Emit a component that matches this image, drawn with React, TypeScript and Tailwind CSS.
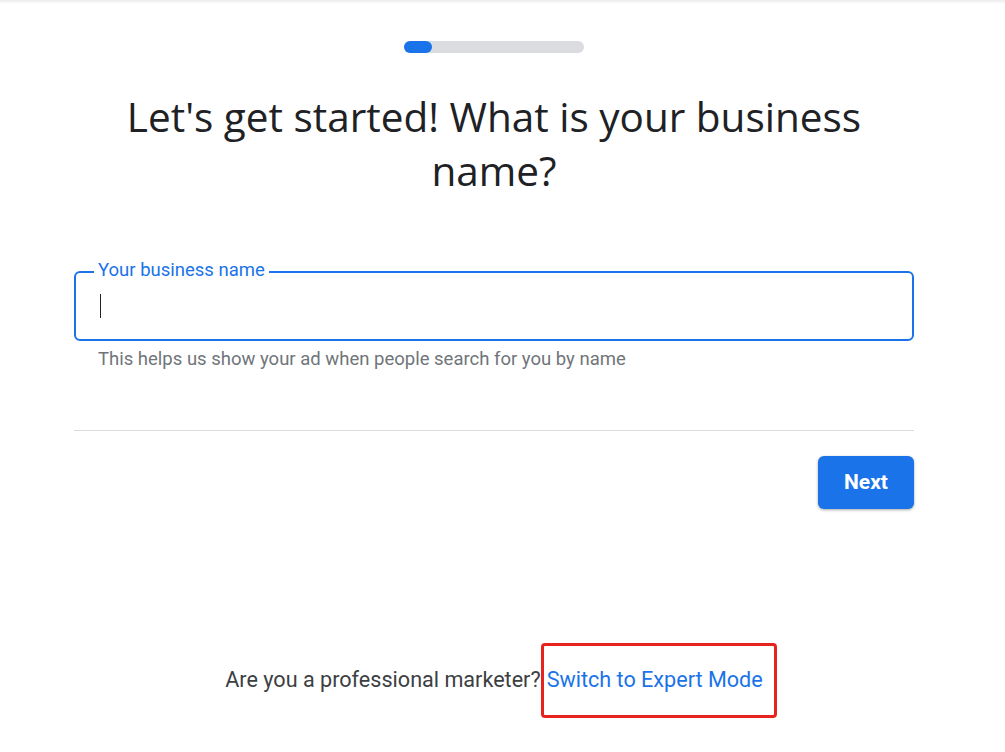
import React from "react";

export default function App() {
  return (
    <div className="relative min-h-[752px] w-[1005px] bg-white font-['Roboto',sans-serif]">
      <div className="h-[4px] w-full bg-gradient-to-b from-[#ececec] to-white" />
      <div className="ml-[74px] flex w-[840px] flex-col">
        {/* progress */}
        <div className="mt-[37px] flex justify-center">
          <div className="h-[12px] w-[180px] rounded-full bg-[#dadce0]">
            <div className="h-[12px] w-[28px] rounded-full bg-[#1a73e8]" />
          </div>
        </div>

        <h1 className="mt-[37px] px-[30px] text-center font-['Open_Sans',sans-serif] text-[40.5px] leading-[54px] text-[#202124]">
          Let's get started! What is your business name?
        </h1>

        {/* input */}
        <div className="relative mt-[73px]">
          <div className="flex h-[70px] items-center rounded-[6px] border-2 border-[#1a73e8] px-[24px]">
            <div className="h-[24px] w-[1px] bg-[#202124]" />
          </div>
          <span className="absolute left-[20px] top-[-11px] bg-white px-[4px] text-[18.5px] leading-[20px] text-[#1a73e8]">
            Your business name
          </span>
        </div>
        <p className="mt-[6px] pl-[24px] text-[18.5px] leading-[24px] text-[#70757a]">
          This helps us show your ad when people search for you by name
        </p>

        <div className="mt-[59px] h-px w-full bg-[#dadce0]" />

        <div className="mt-[25px] flex justify-end">
          <button className="h-[53px] w-[96px] rounded-[6px] bg-[#1a73e8] text-[21px] font-bold text-white shadow-[0_1px_3px_rgba(0,0,0,0.35)]">
            Next
          </button>
        </div>

        <div className="mt-[157px] flex justify-center text-[21.6px] leading-[28px] text-[#3c4043]">
          <span>Are you a professional marketer?</span>
          <span className="relative ml-[6px] text-[#1a73e8]">
            Switch to Expert Mode
            <span className="absolute -left-[6px] -right-[14px] -top-[23px] -bottom-[24px] rounded-[4px] border-[3px] border-[#e8231d]" />
          </span>
        </div>
      </div>
    </div>
  );
}
